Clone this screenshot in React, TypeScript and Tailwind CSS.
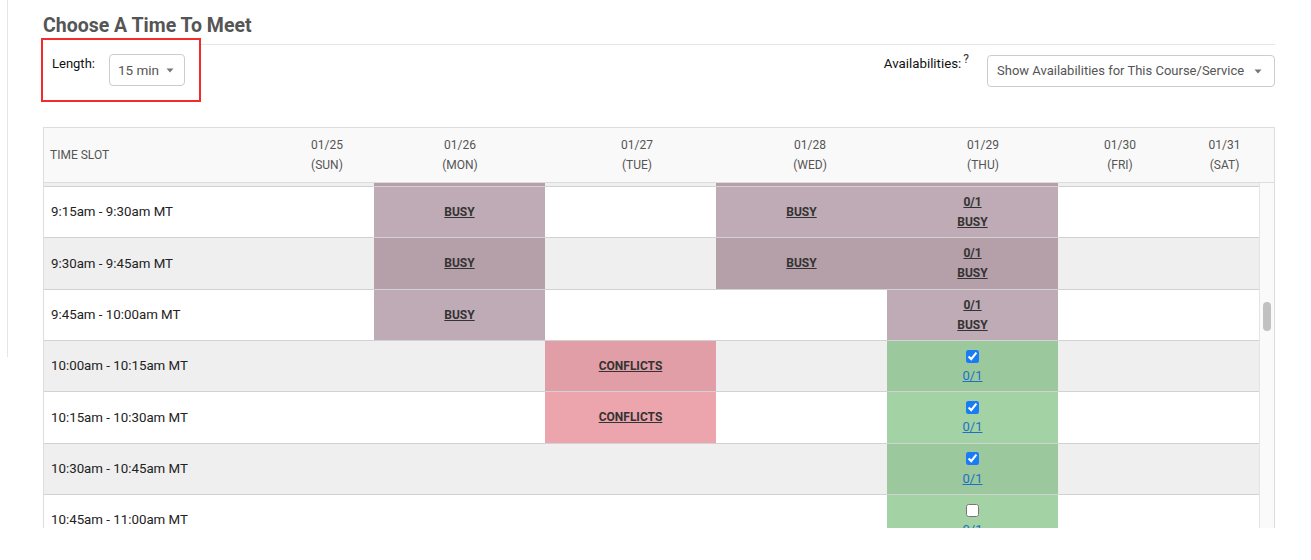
import React from "react";

type Cell =
  | null
  | { kind: "busy"; count?: boolean }
  | { kind: "conflict" }
  | { kind: "open"; checked: boolean };

type Row = { time: string; gray: boolean; cells: Cell[] };

const B: Cell = { kind: "busy" };
const BC: Cell = { kind: "busy", count: true };
const C: Cell = { kind: "conflict" };
const OK: Cell = { kind: "open", checked: true };
const NO: Cell = { kind: "open", checked: false };

const rows: Row[] = [
  { time: "9:00am - 9:15am MT", gray: true, cells: [null, B, null, B, BC, null, null] },
  { time: "9:15am - 9:30am MT", gray: false, cells: [null, B, null, B, BC, null, null] },
  { time: "9:30am - 9:45am MT", gray: true, cells: [null, B, null, B, BC, null, null] },
  { time: "9:45am - 10:00am MT", gray: false, cells: [null, B, null, null, BC, null, null] },
  { time: "10:00am - 10:15am MT", gray: true, cells: [null, null, C, null, OK, null, null] },
  { time: "10:15am - 10:30am MT", gray: false, cells: [null, null, C, null, OK, null, null] },
  { time: "10:30am - 10:45am MT", gray: true, cells: [null, null, null, null, OK, null, null] },
  { time: "10:45am - 11:00am MT", gray: false, cells: [null, null, null, null, NO, null, null] },
];

const days = [
  ["01/25", "(SUN)"],
  ["01/26", "(MON)"],
  ["01/27", "(TUE)"],
  ["01/28", "(WED)"],
  ["01/29", "(THU)"],
  ["01/30", "(FRI)"],
  ["01/31", "(SAT)"],
];

function Caret() {
  return (
    <svg width="8" height="5" viewBox="0 0 8 5" className="shrink-0">
      <path d="M0.5 0.5 L7.5 0.5 L4 4.5 Z" fill="#777" />
    </svg>
  );
}

function CellView({ cell, gray }: { cell: Cell; gray: boolean }) {
  if (!cell) return <div />;
  if (cell.kind === "busy") {
    return (
      <div
        className={`flex flex-col items-center justify-center text-[12px] font-bold text-[#333] leading-[20px] ${
          gray ? "bg-[#b59fa8]" : "bg-[#bfabb5]"
        }`}
      >
        {cell.count && <span className="underline">0/1</span>}
        <span className="underline">BUSY</span>
      </div>
    );
  }
  if (cell.kind === "conflict") {
    return (
      <div
        className={`flex flex-col items-center justify-center text-[12px] font-bold text-[#333] leading-[20px] ${
          gray ? "bg-[#e29ea6]" : "bg-[#eca5ad]"
        }`}
      >
        <span className="underline">CONFLICTS</span>
      </div>
    );
  }
  return (
    <div
      className={`flex flex-col items-center justify-center leading-[20px] ${
        gray ? "bg-[#9bc99d]" : "bg-[#a3d3a5]"
      }`}
    >
      <div className="h-[20px] flex items-center justify-center">
        <input
          type="checkbox"
          readOnly
          checked={cell.checked}
          className="w-[13px] h-[13px] m-0 accent-[#1a7cf5]"
        />
      </div>
      <span className="text-[13px] text-[#1f6fc5] underline">0/1</span>
    </div>
  );
}

export default function App() {
  return (
    <div
      className="w-[1311px] h-[560px] bg-white overflow-hidden flex"
      style={{ fontFamily: "Roboto, 'Liberation Sans', Arial, sans-serif" }}
    >
      <div className="w-[7px] shrink-0" />
      <div className="w-px h-[357px] bg-[#e6e6e6] shrink-0" />
      <div className="ml-[35px] w-[1232px] shrink-0">
        {/* Title */}
        <div className="pt-[12px] pb-[4px] border-b border-[#e6e6e6]">
          <h2 className="text-[19.5px] leading-[28px] font-bold text-[#555]">Choose A Time To Meet</h2>
        </div>

        {/* Controls */}
        <div className="flex items-start justify-between">
          <div className="relative -mt-[7px] -ml-[2px] w-[160px] h-[64px] border-2 border-[#f52a2a] bg-white flex items-start pl-[9px] pt-[14px]">
            <span className="text-[13px] leading-[20px] text-[#111]">Length:</span>
            <div className="ml-[14px] w-[76px] h-[32px] border border-[#cccccc] rounded-[4px] flex items-center justify-between pl-[8px] pr-[10px]">
              <span className="text-[13.5px] text-[#555]">15 min</span>
              <Caret />
            </div>
          </div>
          <div className="flex items-start mt-[9px]">
            <span className="text-[13.3px] leading-[20px] text-[#111]">Availabilities:</span>
            <span className="text-[12px] leading-[12px] text-[#333] ml-[2px] -mt-[1px]">?</span>
            <div className="ml-[18px] mt-[1px] w-[288px] h-[32px] border border-[#cccccc] rounded-[4px] flex items-center justify-between pl-[9px] pr-[12px]">
              <span className="text-[13px] text-[#555]">Show Availabilities for This Course/Service</span>
              <Caret />
            </div>
          </div>
        </div>

        {/* Table */}
        <div className="mt-[25px] border-l border-r border-t border-[#dddddd]">
          <div className="grid grid-cols-[245px_76px_190px_164px_182px_164px_110px_99px] h-[55px] bg-[#f9f9f9] border-b border-[#dddddd] text-[12px] leading-[20px] text-[#555]">
            <div className="flex items-center pl-[6px]">TIME SLOT</div>
            {days.map(([d, w]) => (
              <div key={d} className="flex flex-col items-center justify-center">
                <span>{d}</span>
                <span>{w}</span>
              </div>
            ))}
          </div>
          <div className="flex h-[345px]">
            <div className="w-[1215px] overflow-hidden">
              <div className="-mt-[48.33px]">
                {rows.map((r) => (
                  <div
                    key={r.time}
                    className={`grid grid-cols-[159px_171px_171px_171px_171px_171px_101px_100px] h-[51.33px] border-t border-[#d2d2d2] ${
                      r.gray ? "bg-[#efefef]" : "bg-white"
                    }`}
                  >
                    <div className="flex items-center pl-[7px] text-[13.3px] text-[#222]">{r.time}</div>
                    {r.cells.map((c, i) => (
                      <CellView key={i} cell={c} gray={r.gray} />
                    ))}
                  </div>
                ))}
              </div>
            </div>
            <div className="w-[15px] bg-[#fafafa] border-l border-[#e4e4e4] flex justify-center">
              <div className="mt-[119px] w-[8px] h-[29px] rounded-full bg-[#c1c1c1]" />
            </div>
          </div>
        </div>
      </div>
    </div>
  );
}
